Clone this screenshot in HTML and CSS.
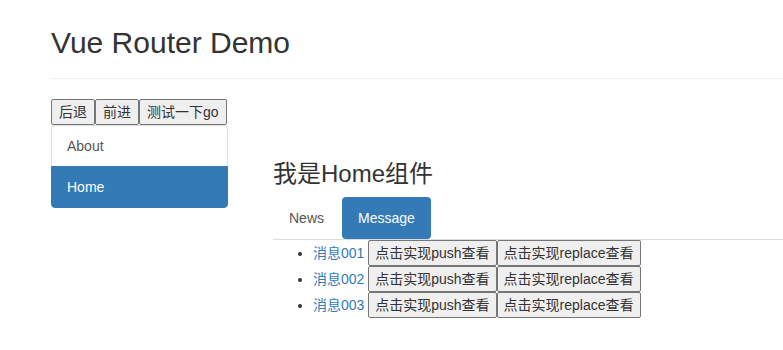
FILE: index.html
```html
<!DOCTYPE html>
<html lang="zh-CN">
<head>
    <meta charset="UTF-8">
    <meta name="viewport" content="width=device-width, initial-scale=1.0">
    <title>Vue Router Demo</title>
    <link rel="stylesheet" href="styles.css">
</head>
<body>

    <div class="page">
        <!-- Header -->
        <div class="page-header">
            <h2>Vue Router Demo</h2>
        </div>

        <!-- History buttons -->
        <div class="history-bar"><button class="btn">后退</button><button class="btn">前进</button><button class="btn">测试一下go</button></div>

        <div class="main">
            <!-- Side navigation -->
            <div class="list-group">
                <a class="list-group-item" href="#/about">About</a>
                <a class="list-group-item active" href="#/home">Home</a>
            </div>

            <!-- Route view -->
            <div class="panel">
                <div class="panel-body">
                    <h3>我是Home组件</h3>
                    <ul class="nav-tabs">
                        <li><a href="#/home/news">News</a></li>
                        <li><a class="active" href="#/home/message">Message</a></li>
                    </ul>
                    <ul class="msg-list">
                        <li><a href="#/home/message/detail/001">消息001</a> <button class="btn">点击实现push查看</button><button class="btn">点击实现replace查看</button></li>
                        <li><a href="#/home/message/detail/002">消息002</a> <button class="btn">点击实现push查看</button><button class="btn">点击实现replace查看</button></li>
                        <li><a href="#/home/message/detail/003">消息003</a> <button class="btn">点击实现push查看</button><button class="btn">点击实现replace查看</button></li>
                    </ul>
                </div>
            </div>
        </div>
    </div>

</body>
</html>
```

FILE: styles.css
```css
body {
    font-family: "Liberation Sans", "Noto Sans CJK SC", sans-serif;
    font-size: 14px;
    line-height: 20px;
    color: #333;
    margin: 0;
    padding: 0;
    background-color: #fff;
}

a {
    color: #337ab7;
    text-decoration: none;
}

.page {
    padding-left: 51px;
}

.page-header {
    margin: 26px 0 20px;
    padding-bottom: 9px;
    border-bottom: 1px solid #eee;
}

.page-header h2 {
    font-size: 30px;
    font-weight: 400;
    line-height: 1.1;
    margin: 0 0 10px;
}

.btn {
    font: inherit;
    color: inherit;
    background-color: #efefef;
    border: 1px solid #767676;
    border-radius: 2px;
    padding: 2px 7px;
    margin: 0;
    cursor: pointer;
}

.btn:hover {
    background-color: #e5e5e5;
}

.history-bar {
    display: flex;
}

.main {
    display: flex;
    align-items: flex-start;
    gap: 29px;
}

.list-group {
    width: 177px;
    flex: none;
}

.list-group-item {
    display: block;
    padding: 10px 15px;
    border: 1px solid #ddd;
    margin-bottom: -1px;
    color: #555;
    background-color: #fff;
}

.list-group-item:first-child {
    border-radius: 4px 4px 0 0;
}

.list-group-item:last-child {
    border-radius: 0 0 4px 4px;
    margin-bottom: 0;
}

.list-group-item.active {
    background-color: #337ab7;
    border-color: #337ab7;
    color: #fff;
}

/* panel runs on past the right edge of the window */
.panel {
    flex: 1;
    min-width: 0;
    background-color: #fff;
    border: 1px solid transparent;
    border-right: 0;
    border-radius: 4px 0 0 4px;
    box-shadow: 0 1px 1px rgba(0, 0, 0, 0.05);
}

.panel-body {
    padding: 15px 0 15px 15px;
}

.panel-body h3 {
    font-size: 24px;
    font-weight: 400;
    line-height: 1.1;
    margin: 20px 0 10px;
}

.nav-tabs {
    display: flex;
    list-style: none;
    margin: 0;
    padding: 0;
    border-bottom: 1px solid #ddd;
}

.nav-tabs a {
    display: block;
    padding: 10px 15px;
    margin-right: 2px;
    border: 1px solid transparent;
    border-radius: 4px;
    color: #555;
}

.nav-tabs a.active {
    background-color: #337ab7;
    color: #fff;
}

.msg-list {
    margin: 0 0 10px;
    padding-left: 40px;
}

.msg-list .btn {
    padding: 2px 6px;
}
```
